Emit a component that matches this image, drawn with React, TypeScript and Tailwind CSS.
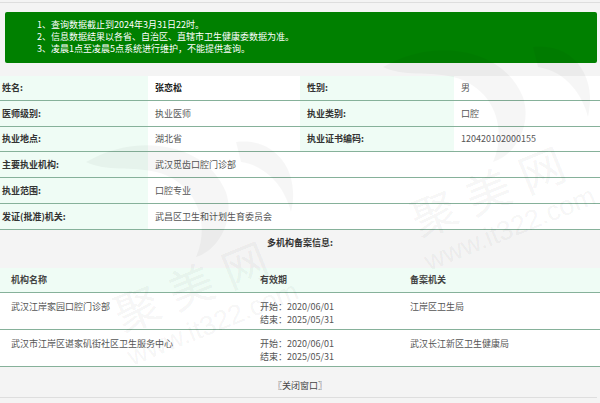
import React from 'react';

const labelCell = 'bg-[#effcf5] font-bold text-[#333]';

type Row = { h: string; cells: [string, string, string, string]; strong?: boolean };

const infoRows: Row[] = [
  { h: 'h-[25px]', cells: ['姓名:', '张恋松', '性别:', '男'], strong: true },
  { h: 'h-[26px]', cells: ['医师级别:', '执业医师', '执业类别:', '口腔'] },
  { h: 'h-[25px]', cells: ['执业地点:', '湖北省', '执业证书编码:', '120420102000155'] },
];

const wideRows = [
  { h: 'h-[26px]', label: '主要执业机构:', value: '武汉觅齿口腔门诊部' },
  { h: 'h-[26px]', label: '执业范围:', value: '口腔专业' },
  { h: 'h-[26px]', label: '发证(批准)机关:', value: '武昌区卫生和计划生育委员会' },
];

const orgs = [
  { name: '武汉江岸家园口腔门诊部', start: '2020/06/01', end: '2025/05/31', dept: '江岸区卫生局' },
  { name: '武汉市江岸区谌家矶街社区卫生服务中心', start: '2020/06/01', end: '2025/05/31', dept: '武汉长江新区卫生健康局' },
];

// faint site watermark, tiled twice over the page
function Watermark({ x, y }: { x: number; y: number }) {
  return (
    <div className="pointer-events-none absolute" style={{ left: x, top: y }}>
      <svg className="absolute left-[-120px] top-[-150px]" width="230" height="130" viewBox="0 0 230 130">
        <path d="M10 30 C60 0 130 10 150 60 C160 90 140 120 120 125 C135 90 120 50 80 40 C55 34 30 40 10 30 Z" fill="#000" fillOpacity="0.035" />
        <path d="M160 10 C200 5 225 40 215 80 C210 60 195 35 165 30 Z" fill="#000" fillOpacity="0.035" />
      </svg>
      <div className="absolute left-0 top-0 -translate-x-1/2 -translate-y-1/2 -rotate-[22deg] whitespace-nowrap text-[45px] leading-none tracking-[13px] text-black/[0.055]">
        聚美网
      </div>
      <div className="absolute left-[17px] top-[42px] -translate-x-1/2 -translate-y-1/2 -rotate-[22deg] whitespace-nowrap font-['Liberation_Sans',sans-serif] text-[27px] leading-none text-black/[0.055]">
        www.it322.com
      </div>
    </div>
  );
}

export default function App() {
  return (
    <div className="relative h-[403px] w-[600px] overflow-hidden bg-[#f4f4f4] font-['Noto_Sans_CJK_SC',sans-serif] text-[9px]">
      <div className="pt-[2px]">
        <div className="h-px bg-[#dedede]" />
      </div>

      {/* notice */}
      <div className="ml-[5px] mr-[3px] mt-[9px] h-[51px] rounded-[2px] bg-[#008000] pl-[32px] pt-[7px] leading-[12px] text-white">
        <p>1、查询数据截止到2024年3月31日22时。</p>
        <p>2、信息数据结果以各省、自治区、直辖市卫生健康委数据为准。</p>
        <p>3、凌晨1点至凌晨5点系统进行维护，不能提供查询。</p>
      </div>

      {/* doctor info */}
      <div className="mt-[13px]">
        {infoRows.map((r) => (
          <div key={r.cells[0]} className={`grid grid-cols-[148px_152px_154px_146px] border-b border-[#86b19a] ${r.h}`}>
            <div className={`flex items-center pl-[2px] ${labelCell}`}>{r.cells[0]}</div>
            <div className={`flex items-center bg-white pl-[7px] ${r.strong ? 'font-bold text-[#222]' : 'text-[#555]'}`}>
              {r.cells[1]}
            </div>
            <div className={`flex items-center pl-[7px] ${labelCell}`}>{r.cells[2]}</div>
            <div className="flex items-center bg-white pl-[7px] text-[#555]">{r.cells[3]}</div>
          </div>
        ))}
        {wideRows.map((r) => (
          <div key={r.label} className={`grid grid-cols-[148px_1fr] border-b border-[#86b19a] ${r.h}`}>
            <div className={`flex items-center pl-[2px] ${labelCell}`}>{r.label}</div>
            <div className="flex items-center bg-white pl-[7px] text-[#555]">{r.value}</div>
          </div>
        ))}
      </div>

      {/* multi-org records */}
      <div className="flex h-[26px] items-center justify-center font-bold text-[#333]">多机构备案信息:</div>
      <div className="h-[12px]" />
      <div className="grid h-[25px] grid-cols-[253px_150px_1fr] items-center border-b border-[#86b19a] bg-[#effcf5] font-bold text-[#444]">
        <div className="pl-[11px]">机构名称</div>
        <div className="pl-[7px]">有效期</div>
        <div className="pl-[7px]">备案机关</div>
      </div>
      {orgs.map((o) => (
        <div key={o.name} className="grid h-[37px] grid-cols-[253px_150px_1fr] border-b border-[#86b19a] bg-white pt-[7px] leading-[13px] text-[#555]">
          <div className="pl-[11px]">{o.name}</div>
          <div className="pl-[7px]">
            <p>开始：{o.start}</p>
            <p>结束：{o.end}</p>
          </div>
          <div className="pl-[7px]">{o.dept}</div>
        </div>
      ))}

      <div className="h-[30px] pt-[13px] text-center leading-[12px] text-[#444]">〖关闭窗口〗</div>
      <div className="mr-[3px] h-px bg-[#dedede]" />

      <Watermark x={493} y={187} />
      <Watermark x={196} y={282} />
    </div>
  );
}
